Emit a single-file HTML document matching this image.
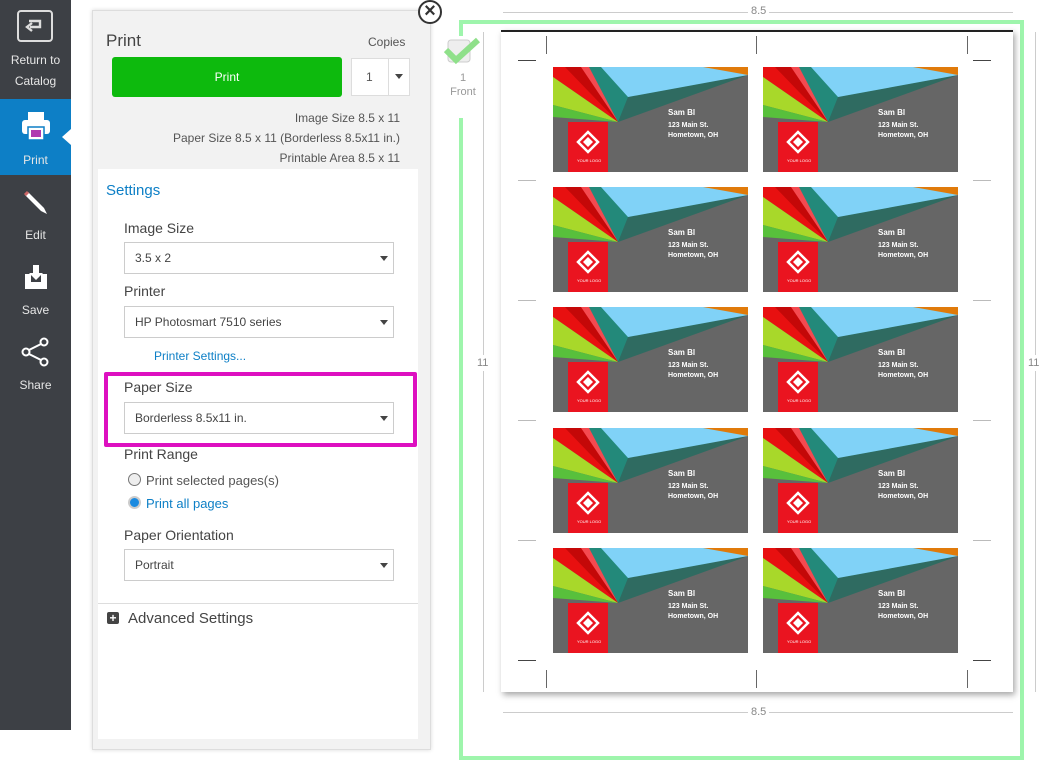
<!DOCTYPE html>
<html><head><meta charset="utf-8"><style>
*{margin:0;padding:0;box-sizing:border-box}
body{width:1053px;height:730px;overflow:hidden;background:#fff;font-family:"Liberation Sans","DejaVu Sans",sans-serif;position:relative;color:#444}
.a{position:absolute}
.side{left:0;top:0;width:71px;height:730px;background:#3d4045}
.nav{position:absolute;left:0;width:71px;color:#e6e6e6;font-size:12px;text-align:center;line-height:21px}
.lbl{font-size:14px;color:#444}
.sel{position:absolute;left:124px;width:270px;height:32px;background:#fff;border:1px solid #ccc;font-size:12px;color:#444;padding-left:10px;line-height:30px}
.sel:after{content:"";position:absolute;right:5px;top:13px;border:4px solid transparent;border-top:5px solid #444}
.card{position:absolute;width:195px;height:105px}
.mk{position:absolute;background:#444}
</style></head><body>
<div class="a side"></div>
<div class="a" style="left:17px;top:10px;width:36px;height:32px;border:2px solid #ddd;border-radius:4px"></div>
<svg class="a" style="left:24px;top:17px" width="22" height="18" viewBox="0 0 22 18"><path d="M5 4 H16 V10 H6" fill="none" stroke="#ddd" stroke-width="2.4"/><path d="M8 6 L3 10 L8 14" fill="none" stroke="#ddd" stroke-width="2.4"/></svg>
<div class="nav" style="top:50px">Return to<br>Catalog</div>
<div class="a" style="left:0;top:99px;width:71px;height:76px;background:#0d7fc6"></div>
<div class="a" style="left:62px;top:129px;border:8px solid transparent;border-right:9px solid #fff;border-left:0"></div>
<svg class="a" style="left:21px;top:111px" width="30" height="30" viewBox="0 0 30 30"><rect x="7" y="1" width="16" height="8" fill="#fff"/><rect x="1" y="9" width="28" height="14" rx="3" fill="#fff"/><rect x="7" y="16" width="16" height="13" fill="#fff" stroke="#0d7fc6" stroke-width="1.5"/><rect x="10" y="19" width="10" height="7" fill="#b03ab0"/></svg>
<div class="nav" style="top:150px">Print</div>
<svg class="a" style="left:22px;top:188px" width="28" height="28" viewBox="0 0 28 28"><path d="M6 4 L22 20 L25 26 L19 23 L3 7 Z" fill="#fff"/><path d="M3 7 L6 4" stroke="#c66" stroke-width="3"/></svg>
<div class="nav" style="top:225px">Edit</div>
<svg class="a" style="left:23px;top:264px" width="26" height="26" viewBox="0 0 26 26"><path d="M2 10 H8 V18 H18 V10 H24 V25 H2 Z" fill="#fff"/><path d="M10 1 H16 V9 H20 L13 16 L6 9 H10 Z" fill="#fff"/></svg>
<div class="nav" style="top:300px">Save</div>
<svg class="a" style="left:21px;top:337px" width="28" height="30" viewBox="0 0 28 30"><circle cx="23" cy="5" r="3.5" fill="none" stroke="#fff" stroke-width="2"/><circle cx="5" cy="15" r="3.5" fill="none" stroke="#fff" stroke-width="2"/><circle cx="23" cy="25" r="3.5" fill="none" stroke="#fff" stroke-width="2"/><path d="M8 13 L20 7 M8 17 L20 23" stroke="#fff" stroke-width="2"/></svg>
<div class="nav" style="top:375px">Share</div>

<div class="a" style="left:92px;top:10px;width:339px;height:740px;background:#f2f2f2;border:1px solid #ddd;box-shadow:0 0 4px rgba(0,0,0,.15)"></div>
<div class="a" style="left:418px;top:0;width:24px;height:24px;border-radius:50%;background:#fff;border:2px solid #333"></div>
<div class="a" style="left:418px;top:-1px;width:24px;height:24px;text-align:center;font-size:20px;line-height:24px;color:#333;font-weight:bold">×</div>
<div class="a" style="left:106px;top:31px;font-size:17px;color:#444">Print</div>
<div class="a" style="left:368px;top:35px;font-size:12px;color:#555">Copies</div>
<div class="a" style="left:112px;top:57px;width:230px;height:40px;background:#0dba0d;border-radius:3px;color:#fff;font-size:12px;text-align:center;line-height:40px">Print</div>
<div class="a" style="left:351px;top:58px;width:59px;height:38px;background:#fff;border:1px solid #ddd"></div>
<div class="a" style="left:388px;top:58px;width:1px;height:38px;background:#ddd"></div>
<div class="a" style="left:366px;top:70px;font-size:12px;color:#555">1</div>
<div class="a" style="left:395px;top:74px;border:4px solid transparent;border-top:5px solid #444"></div>
<div class="a" style="left:150px;top:108px;width:250px;text-align:right;font-size:12px;color:#555;line-height:20px">Image Size 8.5 x 11<br>Paper Size 8.5 x 11 (Borderless 8.5x11 in.)<br>Printable Area 8.5 x 11</div>
<div class="a" style="left:98px;top:169px;width:320px;height:570px;background:#fff"></div>
<div class="a" style="left:106px;top:182px;font-size:15px;color:#0d7fc6">Settings</div>
<div class="a lbl" style="left:124px;top:220px">Image Size</div>
<div class="sel" style="top:242px">3.5 x 2</div>
<div class="a lbl" style="left:124px;top:283px">Printer</div>
<div class="sel" style="top:306px">HP Photosmart 7510 series</div>
<div class="a" style="left:154px;top:349px;font-size:12px;color:#0d7fc6">Printer Settings...</div>
<div class="a" style="left:104px;top:372px;width:313px;height:75px;border:4px solid #dd10c0;border-radius:2px"></div>
<div class="a lbl" style="left:124px;top:379px">Paper Size</div>
<div class="sel" style="top:402px">Borderless 8.5x11 in.</div>
<div class="a lbl" style="left:124px;top:446px">Print Range</div>
<div class="a" style="left:128px;top:473px;width:13px;height:13px;border-radius:50%;background:#eee;border:1px solid #777"></div>
<div class="a" style="left:146px;top:473px;font-size:13px;color:#555">Print selected pages(s)</div>
<div class="a" style="left:128px;top:496px;width:13px;height:13px;border-radius:50%;background:#1a8ae0;border:2px solid #ccc"></div>
<div class="a" style="left:146px;top:496px;font-size:13px;color:#0d7fc6">Print all pages</div>
<div class="a lbl" style="left:124px;top:527px">Paper Orientation</div>
<div class="sel" style="top:549px">Portrait</div>
<div class="a" style="left:98px;top:603px;width:320px;height:1px;background:#ddd"></div>
<div class="a" style="left:107px;top:612px;width:12px;height:12px;background:#444;border-radius:2px;color:#fff;font-size:12px;line-height:12px;text-align:center;font-weight:bold">+</div>
<div class="a" style="left:128px;top:610px;font-size:15px;color:#444">Advanced Settings</div>

<!-- preview -->
<div class="a" style="left:459px;top:20px;width:565px;height:740px;border:4px solid #9ef5ac"></div>
<div class="a" style="left:503px;top:12px;width:510px;height:1px;background:#ccc"></div>
<div class="a" style="left:748px;top:5px;background:#fff;padding:0 3px;font-size:11px;color:#888">8.5</div>
<div class="a" style="left:503px;top:712px;width:510px;height:1px;background:#ccc"></div>
<div class="a" style="left:748px;top:706px;background:#fff;padding:0 3px;font-size:11px;color:#888">8.5</div>
<div class="a" style="left:483px;top:32px;width:1px;height:660px;background:#ccc"></div>
<div class="a" style="left:477px;top:355px;background:#fff;font-size:11px;color:#888;padding:2px 0">11</div>
<div class="a" style="left:1035px;top:32px;width:1px;height:660px;background:#ccc"></div>
<div class="a" style="left:1028px;top:355px;background:#fff;font-size:11px;color:#888;padding:2px 0">11</div>
<div class="a" style="left:445px;top:36px;width:30px;height:82px;background:#fff"></div>
<svg class="a" style="left:444px;top:36px" width="36" height="30" viewBox="0 0 36 30"><rect x="4" y="4" width="22" height="22" rx="3" fill="#eee" stroke="#ccc"/><path d="M2 14 L12 24 L34 4" fill="none" stroke="#8fe08a" stroke-width="6"/></svg>
<div class="a" style="left:445px;top:71px;width:36px;text-align:center;font-size:11px;color:#999;line-height:14px">1<br>Front</div>
<div class="a" style="left:501px;top:30px;width:512px;height:662px;background:#fff;border-top:2px solid #222;box-shadow:2px 3px 6px rgba(0,0,0,.35)"></div>
<div class="mk" style="left:546px;top:36px;width:1px;height:18px;background:#666"></div>
<div class="mk" style="left:756px;top:36px;width:1px;height:18px;background:#666"></div>
<div class="mk" style="left:967px;top:36px;width:1px;height:18px;background:#666"></div>
<div class="mk" style="left:546px;top:670px;width:1px;height:18px;background:#666"></div>
<div class="mk" style="left:756px;top:670px;width:1px;height:18px;background:#666"></div>
<div class="mk" style="left:967px;top:670px;width:1px;height:18px;background:#666"></div>
<div class="mk" style="left:518px;top:60px;width:18px;height:1px"></div>
<div class="mk" style="left:973px;top:60px;width:18px;height:1px"></div>
<div class="mk" style="left:518px;top:660px;width:18px;height:1px"></div>
<div class="mk" style="left:973px;top:660px;width:18px;height:1px"></div>
<div class="mk" style="left:518px;top:180px;width:18px;height:1px;background:#bbb"></div><div class="mk" style="left:973px;top:180px;width:18px;height:1px;background:#bbb"></div>
<div class="mk" style="left:518px;top:300px;width:18px;height:1px;background:#bbb"></div><div class="mk" style="left:973px;top:300px;width:18px;height:1px;background:#bbb"></div>
<div class="mk" style="left:518px;top:420px;width:18px;height:1px;background:#bbb"></div><div class="mk" style="left:973px;top:420px;width:18px;height:1px;background:#bbb"></div>
<div class="mk" style="left:518px;top:540px;width:18px;height:1px;background:#bbb"></div><div class="mk" style="left:973px;top:540px;width:18px;height:1px;background:#bbb"></div>

<svg width="0" height="0" style="position:absolute"><defs><g id="c">
<rect width="195" height="105" fill="#666"/>
<polygon points="35,0 195,0 65,55" fill="#23897a"/>
<polygon points="75,30 195,8 65,55" fill="#2f6b61"/>
<polygon points="48,0 195,0 195,8 75,30" fill="#80d2f7"/>
<polygon points="150,0 195,0 195,8" fill="#e07a0a"/>
<polygon points="0,0 30,0 65,55 0,10" fill="#e81010"/>
<polygon points="26,0 36,0 65,55" fill="#f44a50"/>
<polygon points="12,0 28,0 65,55" fill="#c40808"/>
<polygon points="0,10 65,55 0,38" fill="#a8d82a"/>
<polygon points="0,38 65,55 0,50" fill="#58c03c"/>
<rect x="15" y="55" width="40" height="50" fill="#ea1420"/>
<polygon points="35,65 45,75 35,85 25,75" fill="none" stroke="#fff" stroke-width="2.5"/>
<polygon points="35,70 40,75 35,80 30,75" fill="#fff"/>
</g></defs></svg>

<svg class="card" style="left:553px;top:67px" viewBox="0 0 195 105"><use href="#c"/><text x="115" y="48" fill="#fff" font-size="8" font-weight="bold">Sam Bl</text><text x="115" y="60" fill="#fff" font-size="7" font-weight="bold">123 Main St.</text><text x="115" y="70" fill="#fff" font-size="7" font-weight="bold">Hometown, OH</text><text x="24" y="95" fill="#fff" font-size="4">YOUR LOGO</text></svg>
<svg class="card" style="left:763px;top:67px" viewBox="0 0 195 105"><use href="#c"/><text x="115" y="48" fill="#fff" font-size="8" font-weight="bold">Sam Bl</text><text x="115" y="60" fill="#fff" font-size="7" font-weight="bold">123 Main St.</text><text x="115" y="70" fill="#fff" font-size="7" font-weight="bold">Hometown, OH</text><text x="24" y="95" fill="#fff" font-size="4">YOUR LOGO</text></svg>
<svg class="card" style="left:553px;top:187px" viewBox="0 0 195 105"><use href="#c"/><text x="115" y="48" fill="#fff" font-size="8" font-weight="bold">Sam Bl</text><text x="115" y="60" fill="#fff" font-size="7" font-weight="bold">123 Main St.</text><text x="115" y="70" fill="#fff" font-size="7" font-weight="bold">Hometown, OH</text><text x="24" y="95" fill="#fff" font-size="4">YOUR LOGO</text></svg>
<svg class="card" style="left:763px;top:187px" viewBox="0 0 195 105"><use href="#c"/><text x="115" y="48" fill="#fff" font-size="8" font-weight="bold">Sam Bl</text><text x="115" y="60" fill="#fff" font-size="7" font-weight="bold">123 Main St.</text><text x="115" y="70" fill="#fff" font-size="7" font-weight="bold">Hometown, OH</text><text x="24" y="95" fill="#fff" font-size="4">YOUR LOGO</text></svg>
<svg class="card" style="left:553px;top:307px" viewBox="0 0 195 105"><use href="#c"/><text x="115" y="48" fill="#fff" font-size="8" font-weight="bold">Sam Bl</text><text x="115" y="60" fill="#fff" font-size="7" font-weight="bold">123 Main St.</text><text x="115" y="70" fill="#fff" font-size="7" font-weight="bold">Hometown, OH</text><text x="24" y="95" fill="#fff" font-size="4">YOUR LOGO</text></svg>
<svg class="card" style="left:763px;top:307px" viewBox="0 0 195 105"><use href="#c"/><text x="115" y="48" fill="#fff" font-size="8" font-weight="bold">Sam Bl</text><text x="115" y="60" fill="#fff" font-size="7" font-weight="bold">123 Main St.</text><text x="115" y="70" fill="#fff" font-size="7" font-weight="bold">Hometown, OH</text><text x="24" y="95" fill="#fff" font-size="4">YOUR LOGO</text></svg>
<svg class="card" style="left:553px;top:428px" viewBox="0 0 195 105"><use href="#c"/><text x="115" y="48" fill="#fff" font-size="8" font-weight="bold">Sam Bl</text><text x="115" y="60" fill="#fff" font-size="7" font-weight="bold">123 Main St.</text><text x="115" y="70" fill="#fff" font-size="7" font-weight="bold">Hometown, OH</text><text x="24" y="95" fill="#fff" font-size="4">YOUR LOGO</text></svg>
<svg class="card" style="left:763px;top:428px" viewBox="0 0 195 105"><use href="#c"/><text x="115" y="48" fill="#fff" font-size="8" font-weight="bold">Sam Bl</text><text x="115" y="60" fill="#fff" font-size="7" font-weight="bold">123 Main St.</text><text x="115" y="70" fill="#fff" font-size="7" font-weight="bold">Hometown, OH</text><text x="24" y="95" fill="#fff" font-size="4">YOUR LOGO</text></svg>
<svg class="card" style="left:553px;top:548px" viewBox="0 0 195 105"><use href="#c"/><text x="115" y="48" fill="#fff" font-size="8" font-weight="bold">Sam Bl</text><text x="115" y="60" fill="#fff" font-size="7" font-weight="bold">123 Main St.</text><text x="115" y="70" fill="#fff" font-size="7" font-weight="bold">Hometown, OH</text><text x="24" y="95" fill="#fff" font-size="4">YOUR LOGO</text></svg>
<svg class="card" style="left:763px;top:548px" viewBox="0 0 195 105"><use href="#c"/><text x="115" y="48" fill="#fff" font-size="8" font-weight="bold">Sam Bl</text><text x="115" y="60" fill="#fff" font-size="7" font-weight="bold">123 Main St.</text><text x="115" y="70" fill="#fff" font-size="7" font-weight="bold">Hometown, OH</text><text x="24" y="95" fill="#fff" font-size="4">YOUR LOGO</text></svg>
</body></html>
